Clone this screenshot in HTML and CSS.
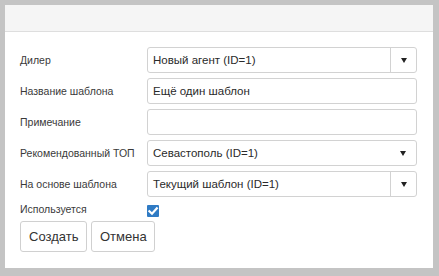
FILE: index.html
```html
<!DOCTYPE html>
<html lang="ru">
<head>
<meta charset="utf-8">
<link rel="stylesheet" href="styles.css">
</head>
<body>
<div class="panel">
  <div class="panel-head"></div>
  <div class="panel-body">
    <div class="row">
      <label class="lbl">Дилер</label>
      <div class="field combo">
        <span class="val">Новый агент (ID=1)</span>
        <span class="btn-arrow sep"><span class="tri"></span></span>
      </div>
    </div>
    <div class="row">
      <label class="lbl">Название шаблона</label>
      <div class="field"><span class="val">Ещё один шаблон</span></div>
    </div>
    <div class="row">
      <label class="lbl">Примечание</label>
      <div class="field"></div>
    </div>
    <div class="row">
      <label class="lbl">Рекомендованный ТОП</label>
      <div class="field combo">
        <span class="val">Севастополь (ID=1)</span>
        <span class="btn-arrow"><span class="tri"></span></span>
      </div>
    </div>
    <div class="row">
      <label class="lbl">На основе шаблона</label>
      <div class="field combo">
        <span class="val">Текущий шаблон (ID=1)</span>
        <span class="btn-arrow sep"><span class="tri"></span></span>
      </div>
    </div>
    <div class="row check-row">
      <label class="lbl">Используется</label>
      <span class="check">
        <svg viewBox="0 0 12 12" width="12" height="12"><rect width="12" height="12" rx="1" fill="#2f7bc4"/><path d="M2.4 6.2 L5 8.7 L9.8 3.4" fill="none" stroke="#fff" stroke-width="2.2" stroke-linecap="square"/></svg>
      </span>
    </div>
    <div class="actions">
      <button class="btn btn-create">Создать</button>
      <button class="btn btn-cancel">Отмена</button>
    </div>
  </div>
</div>
</body>
</html>
```
FILE: styles.css
```css
html, body {
  margin: 0;
  padding: 0;
}
body {
  background: #c4c4c4;
  font-family: "Liberation Sans", Arial, sans-serif;
  color: #333;
  width: 439px;
  height: 276px;
  overflow: hidden;
}
.panel {
  margin: 5px 0 0 5px;
  width: 428px;
  height: 263px;
  background: #fff;
  box-sizing: border-box;
}
.panel-head {
  height: 27px;
  background: #f5f5f5;
  border-bottom: 1px solid #dedede;
  box-sizing: border-box;
}
.panel-body {
  padding: 15px 16px 0 15px;
  display: flex;
  flex-direction: column;
}
.row {
  display: flex;
  align-items: center;
  height: 26px;
  margin-bottom: 5px;
}
.lbl {
  width: 127px;
  flex: none;
  font-size: 10.5px;
  color: #3a3a3a;
}
.field {
  flex: 1;
  height: 26px;
  border: 1px solid #d2d2d2;
  border-radius: 3px;
  box-sizing: border-box;
  display: flex;
  align-items: center;
  font-size: 11.5px;
  color: #2a2a2a;
}
.val {
  flex: 1;
  padding-left: 5px;
  white-space: nowrap;
}
.btn-arrow {
  width: 26px;
  height: 100%;
  display: flex;
  align-items: center;
  justify-content: center;
  box-sizing: border-box;
}
.btn-arrow.sep {
  border-left: 1px solid #d2d2d2;
}
.tri {
  width: 0;
  height: 0;
  border-left: 3px solid transparent;
  border-right: 3px solid transparent;
  border-top: 5px solid #222;
}
.check-row {
  height: 18px;
  margin-top: -2px;
  margin-bottom: 3px;
  align-items: center;
}
.check-row .lbl {
  align-self: flex-start;
  margin-top: 3px;
}
.check {
  display: flex;
  margin-top: 4px;
}
.actions {
  display: flex;
  gap: 4px;
}
.btn {
  height: 31px;
  background: #fff;
  border: 1px solid #d0d0d0;
  border-radius: 3px;
  font-family: "Liberation Sans", Arial, sans-serif;
  font-size: 13px;
  color: #333;
  padding: 0 8px;
  box-sizing: border-box;
}
.btn-create {
  width: 67px;
}
.btn-cancel {
  width: 64px;
}
```
